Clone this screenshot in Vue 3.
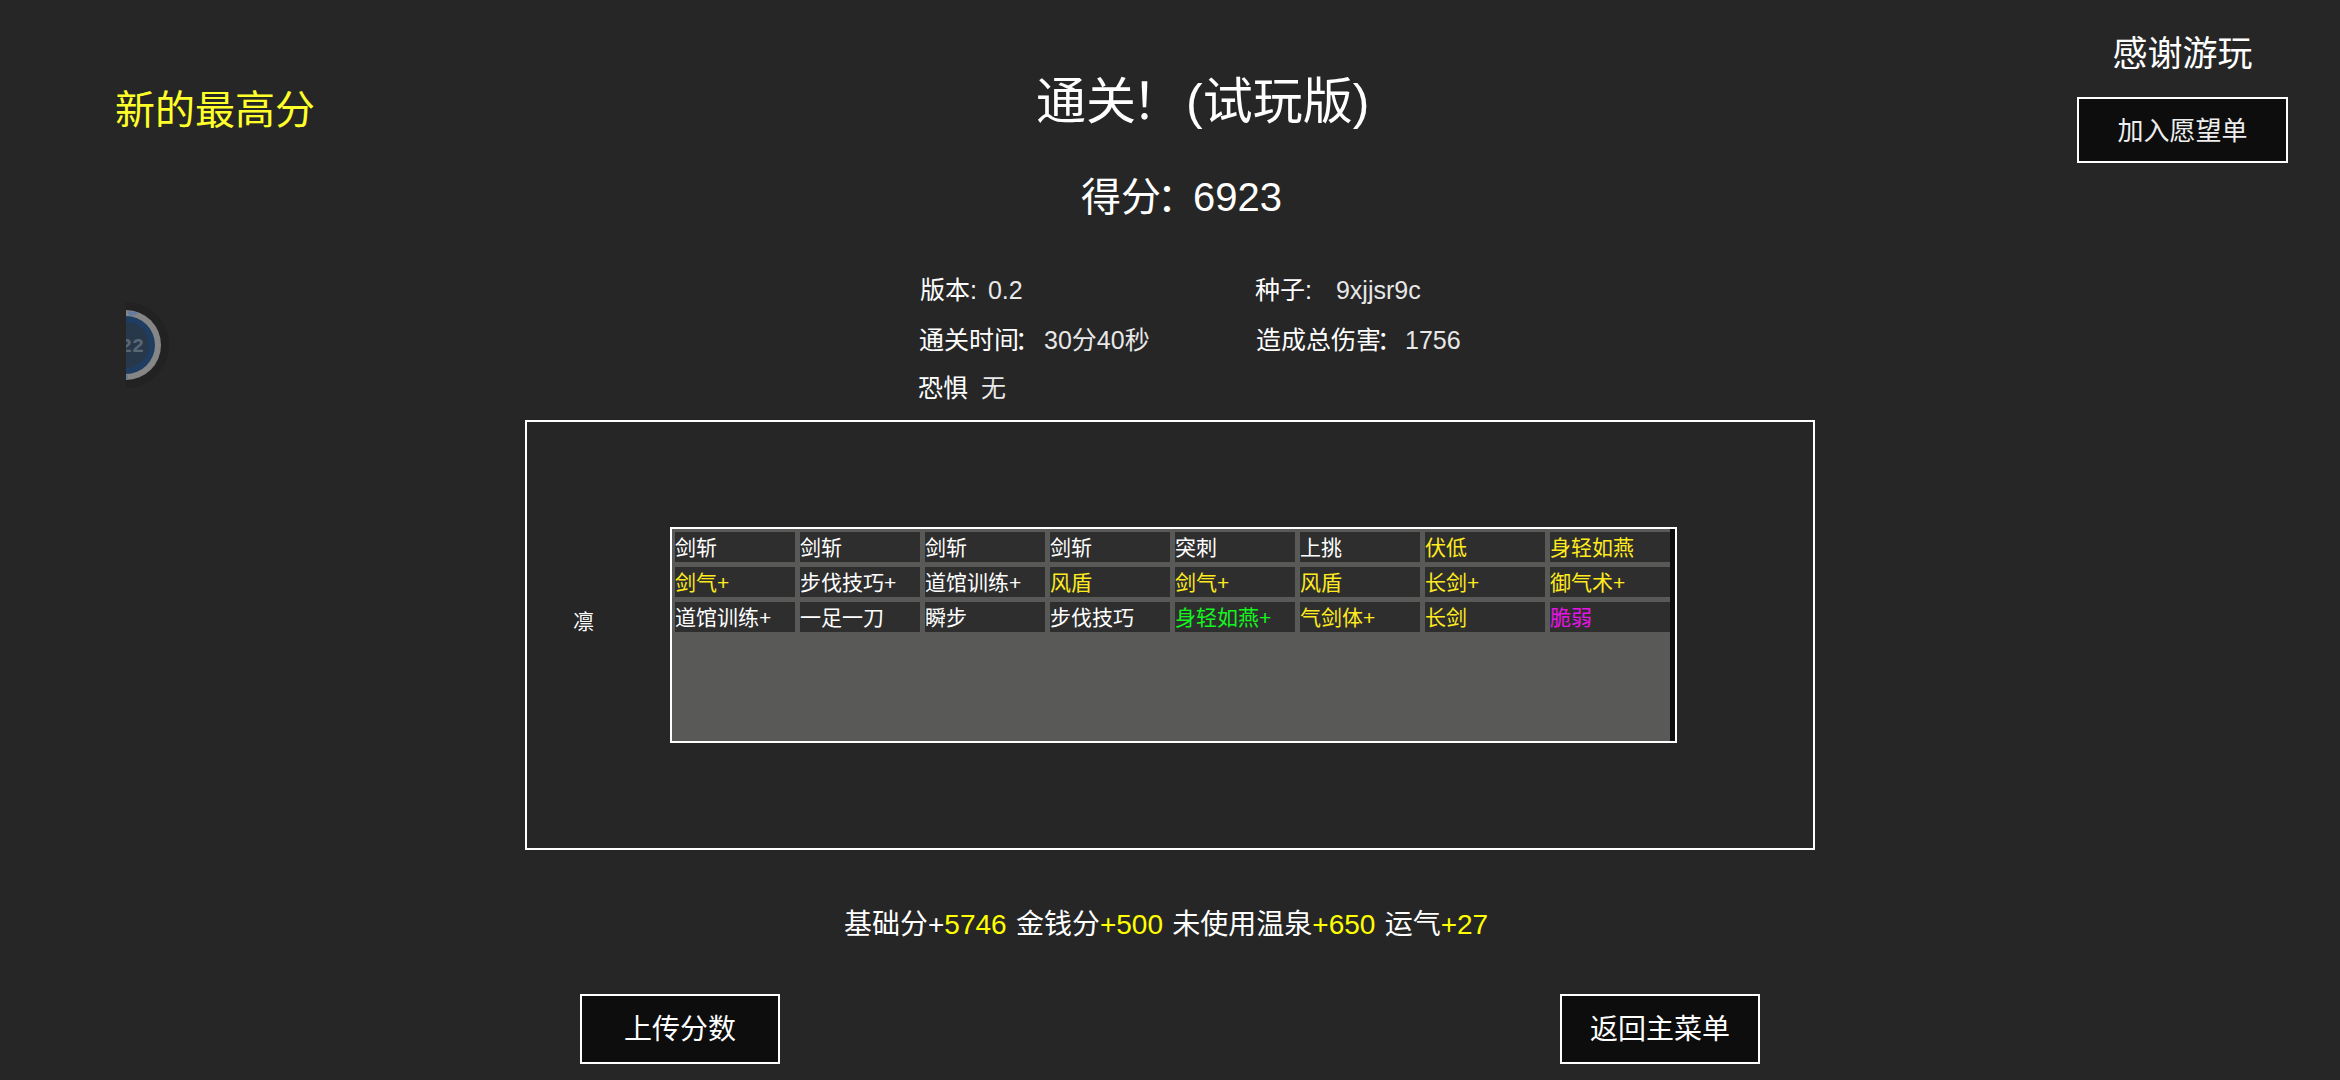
<template>
  <div class="result">
    <header class="result__header">
      <div class="result__record">新的最高分</div>
      <div class="result__heading">
        <h1 class="result__title">通关<span class="punct">！</span>(试玩版)</h1>
        <p class="result__score">得分<span class="punct">：</span><span class="result__points">6923</span></p>
      </div>
      <div class="result__thanks">
        <p class="result__thanks-text">感谢游玩</p>
        <button class="btn btn--wishlist">加入愿望单</button>
      </div>
    </header>

    <div class="info">
      <div
        v-for="item in info"
        :key="item.key"
        :class="['info__item', `info__item--${item.key}`]"
      >
        <span class="info__label">{{ item.label }}<span v-if="item.colon" class="punct">：</span></span>
        <span class="info__value">{{ item.value }}</span>
      </div>
    </div>

    <section class="team">
      <div class="team__name">凛</div>
      <div class="deck">
        <div class="deck__grid">
          <div
            v-for="(card, i) in cards"
            :key="i"
            :class="['card', card[1] && `card--${card[1]}`]"
          >{{ card[0] }}</div>
        </div>
        <div class="deck__scrollbar" />
      </div>
    </section>

    <p class="summary">基础分+<em>5746</em> 金钱分<em>+500</em> 未使用温泉<em>+650</em> 运气<em>+27</em></p>

    <footer class="result__footer">
      <button class="btn">上传分数</button>
      <button class="btn">返回主菜单</button>
    </footer>

    <div class="bubble">
      <svg width="46" height="92" viewBox="0 0 46 92">
        <circle cx="0" cy="46" r="43" fill="#222222" />
        <circle cx="0" cy="46" r="35" fill="#868686" />
        <circle cx="0" cy="46" r="29" fill="#1f3d61" />
        <circle cx="0" cy="46" r="23" fill="#28384b" />
        <path d="M1 12.500h8l3 2-3 2H3z" fill="#667c9c" />
        <path d="M0 76h2v4H0z" fill="#667c9c" />
        <text x="-6" y="53" class="bubble__text">22</text>
      </svg>
    </div>
  </div>
</template>

<script setup>
const info = [
  { key: 'version', label: '版本:', value: '0.2' },
  { key: 'seed', label: '种子:', value: '9xjjsr9c' },
  { key: 'time', label: '通关时间', colon: true, value: '30分40秒' },
  { key: 'damage', label: '造成总伤害', colon: true, value: '1756' },
  { key: 'fear', label: '恐惧', value: '无' }
]

const cards = [
  ['剑斩'], ['剑斩'], ['剑斩'], ['剑斩'],
  ['突刺'], ['上挑'], ['伏低', 'gold'], ['身轻如燕', 'gold'],
  ['剑气+', 'gold'], ['步伐技巧+'], ['道馆训练+'], ['风盾', 'gold'],
  ['剑气+', 'gold'], ['风盾', 'gold'], ['长剑+', 'gold'], ['御气术+', 'gold'],
  ['道馆训练+'], ['一足一刀'], ['瞬步'], ['步伐技巧'],
  ['身轻如燕+', 'green'], ['气剑体+', 'gold'], ['长剑', 'gold'], ['脆弱', 'curse']
]
</script>

<style>
body {
  margin: 0;
  background: #262626;
}
</style>

<style scoped>
.result {
  position: relative;
  box-sizing: border-box;
  width: 2340px;
  height: 1080px;
  overflow: hidden;
  display: flex;
  flex-direction: column;
  background: #262626;
  color: #fff;
  font-family: "Liberation Sans", "Noto Sans CJK SC", sans-serif;
  white-space: nowrap;
}

.result h1,
.result p {
  margin: 0;
  font-weight: 400;
}

/* fullwidth marks sit closer to the preceding glyph */
.punct {
  margin: 0 4px 0 -4px;
}

.result__header {
  display: flex;
  height: 260px;
}

.result__record {
  width: 921px;
  padding: 80px 0 0 115px;
  font-size: 40px;
  line-height: 60px;
  color: #ffff2a;
}

.result__heading {
  width: 1041px;
  padding-top: 62px;
}

.result__title {
  font-size: 50px;
  line-height: 80px;
}

.result__score {
  padding: 25px 0 0 45px;
  font-size: 40px;
  line-height: 60px;
}

.result__points {
  margin-left: -8px;
}

.result__thanks {
  display: flex;
  flex-direction: column;
  align-items: center;
  width: 211px;
  padding-top: 29px;
}

.result__thanks-text {
  height: 68px;
  font-size: 35px;
  line-height: 50px;
}

.btn {
  box-sizing: border-box;
  width: 200px;
  height: 70px;
  padding: 2px 0 0;
  border: 2px solid #fff;
  border-radius: 0;
  background: #0d0d0d;
  color: #fff;
  font-family: inherit;
  font-size: 28px;
  line-height: 40px;
}

.btn--wishlist {
  flex: none;
  width: 211px;
  height: 66px;
  font-size: 26px;
  color: #eee;
}

.info {
  display: grid;
  grid-template-columns: 336px 400px;
  grid-template-rows: 50px 48px 50px;
  height: 155px;
  padding: 5px 0 0 919px;
  font-size: 25px;
  line-height: 50px;
}

.info__item {
  display: flex;
}

.info__item--version {
  gap: 11px;
  padding-left: 1px;
}

.info__item--seed {
  gap: 24px;
}

.info__item--damage {
  padding-left: 1px;
}

.info__item--damage .info__value {
  margin-left: -1px;
}

.info__item--fear {
  gap: 13px;
  margin-left: -1px;
}

.info__value {
  color: #e8e8e8;
}

.team {
  box-sizing: border-box;
  display: flex;
  align-items: center;
  width: 1290px;
  height: 430px;
  margin-left: 525px;
  border: 2px solid #fff;
}

.team__name {
  width: 97px;
  padding: 0 0 30px 46px;
  font-size: 21px;
}

.deck {
  box-sizing: border-box;
  display: flex;
  width: 1007px;
  height: 216px;
  border: 2px solid #fff;
  background: #595957;
}

.deck__grid {
  display: grid;
  grid-template-columns: repeat(8, 120px);
  grid-auto-rows: 30px;
  align-content: start;
  gap: 5px;
  padding: 3px 0 0 3px;
}

.deck__scrollbar {
  width: 5px;
  background: #0d0d0d;
}

.card {
  background: #2e2e2e;
  color: #fff;
  font-size: 21px;
  line-height: 32px;
}

.card--gold {
  color: #ffeb1e;
}

.card--green {
  color: #14f51e;
}

.card--curse {
  color: #e614e6;
}

.summary {
  padding: 50px 0 0 844px;
  font-size: 28px;
  line-height: 50px;
  word-spacing: 1.5px;
}

.summary em {
  font-style: normal;
  color: #ff0;
}

.result__footer {
  display: flex;
  gap: 780px;
  margin-top: 44px;
  padding-left: 580px;
}

/* floating system bubble, half hidden behind the left edge */
.bubble {
  position: absolute;
  left: 126px;
  top: 299px;
  width: 46px;
  height: 92px;
}

.bubble svg {
  display: block;
}

.bubble__text {
  fill: #596673;
  font-family: "Liberation Mono", monospace;
  font-size: 20px;
  font-weight: 700;
}
</style>
